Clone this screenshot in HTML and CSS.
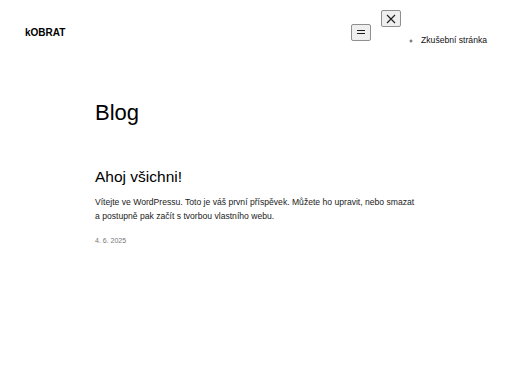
FILE: index.html
```html
<!DOCTYPE html>
<html lang="cs">

<head>
  <meta charset="UTF-8">
  <meta name="viewport" content="width=device-width, initial-scale=1.0">
  <title>Blog – kOBRAT</title>
  <link rel="stylesheet" href="styles.css">
</head>

<body>
  <header class="site-header">
    <p class="site-title">kOBRAT</p>
    <nav class="site-nav">
      <button class="nav-open" aria-label="Otevřít menu">
        <svg width="12" height="10" viewBox="0 0 12 10">
          <path d="M2 3.5h8M2 6.5h8" stroke="#1e1e1e" stroke-width="1.2" fill="none" />
        </svg>
      </button>
      <div class="nav-panel">
        <button class="nav-close" aria-label="Zavřít menu">
          <svg width="12" height="12" viewBox="0 0 12 12">
            <path d="M2 2l8 8M10 2l-8 8" stroke="#1e1e1e" stroke-width="1.1" fill="none" />
          </svg>
        </button>
        <ul class="nav-list">
          <li><a href="#">Zkušební stránka</a></li>
        </ul>
      </div>
    </nav>
  </header>

  <main class="content">
    <h1 class="page-title">Blog</h1>

    <article class="post">
      <h2 class="post-title">Ahoj všichni!</h2>
      <p class="post-excerpt">Vítejte ve WordPressu. Toto je váš první příspěvek. Můžete ho upravit, nebo smazat a postupně pak začít s tvorbou vlastního webu.</p>
      <p class="post-date">4. 6. 2025</p>
    </article>
  </main>
</body>

</html>
```

FILE: styles.css
```css
body {
  margin: 0;
  font-family: "Liberation Sans", Arial, sans-serif;
  color: #111;
  background-color: #fff;
}

.site-header {
  display: flex;
  justify-content: space-between;
  align-items: center;
  padding: 10px 25px 0 25px;
}

.site-title {
  margin: 0;
  font-size: 10px;
  font-weight: bold;
  color: #000;
}

.site-nav {
  display: flex;
  align-items: center;
  gap: 10px;
}

.nav-open,
.nav-close {
  display: flex;
  align-items: center;
  justify-content: center;
  width: 20px;
  height: 17px;
  padding: 0;
  background-color: #efefef;
  border: 1px solid #8f8f8f;
  border-radius: 2px;
}

.nav-list {
  margin: 8px 0 9px 0;
  padding-left: 40px;
  list-style: circle;
  font-size: 8.6px;
}

.nav-list li::marker {
  font-size: 8px;
  color: #555;
}

.nav-list a {
  color: #111;
  text-decoration: none;
}

.content {
  max-width: 322px;
  margin: 0 auto;
  padding-top: 46px;
}

.page-title {
  margin: 0;
  font-size: 22px;
  font-weight: normal;
  color: #000;
}

.post {
  margin-top: 42px;
}

.post-title {
  margin: 0;
  font-size: 15.5px;
  font-weight: normal;
  color: #000;
}

.post-excerpt {
  margin: 10px 0 0 0;
  font-size: 8.6px;
  line-height: 13.5px;
  color: #222;
}

.post-date {
  margin: 14px 0 0 0;
  font-size: 7px;
  color: #777;
}
```
